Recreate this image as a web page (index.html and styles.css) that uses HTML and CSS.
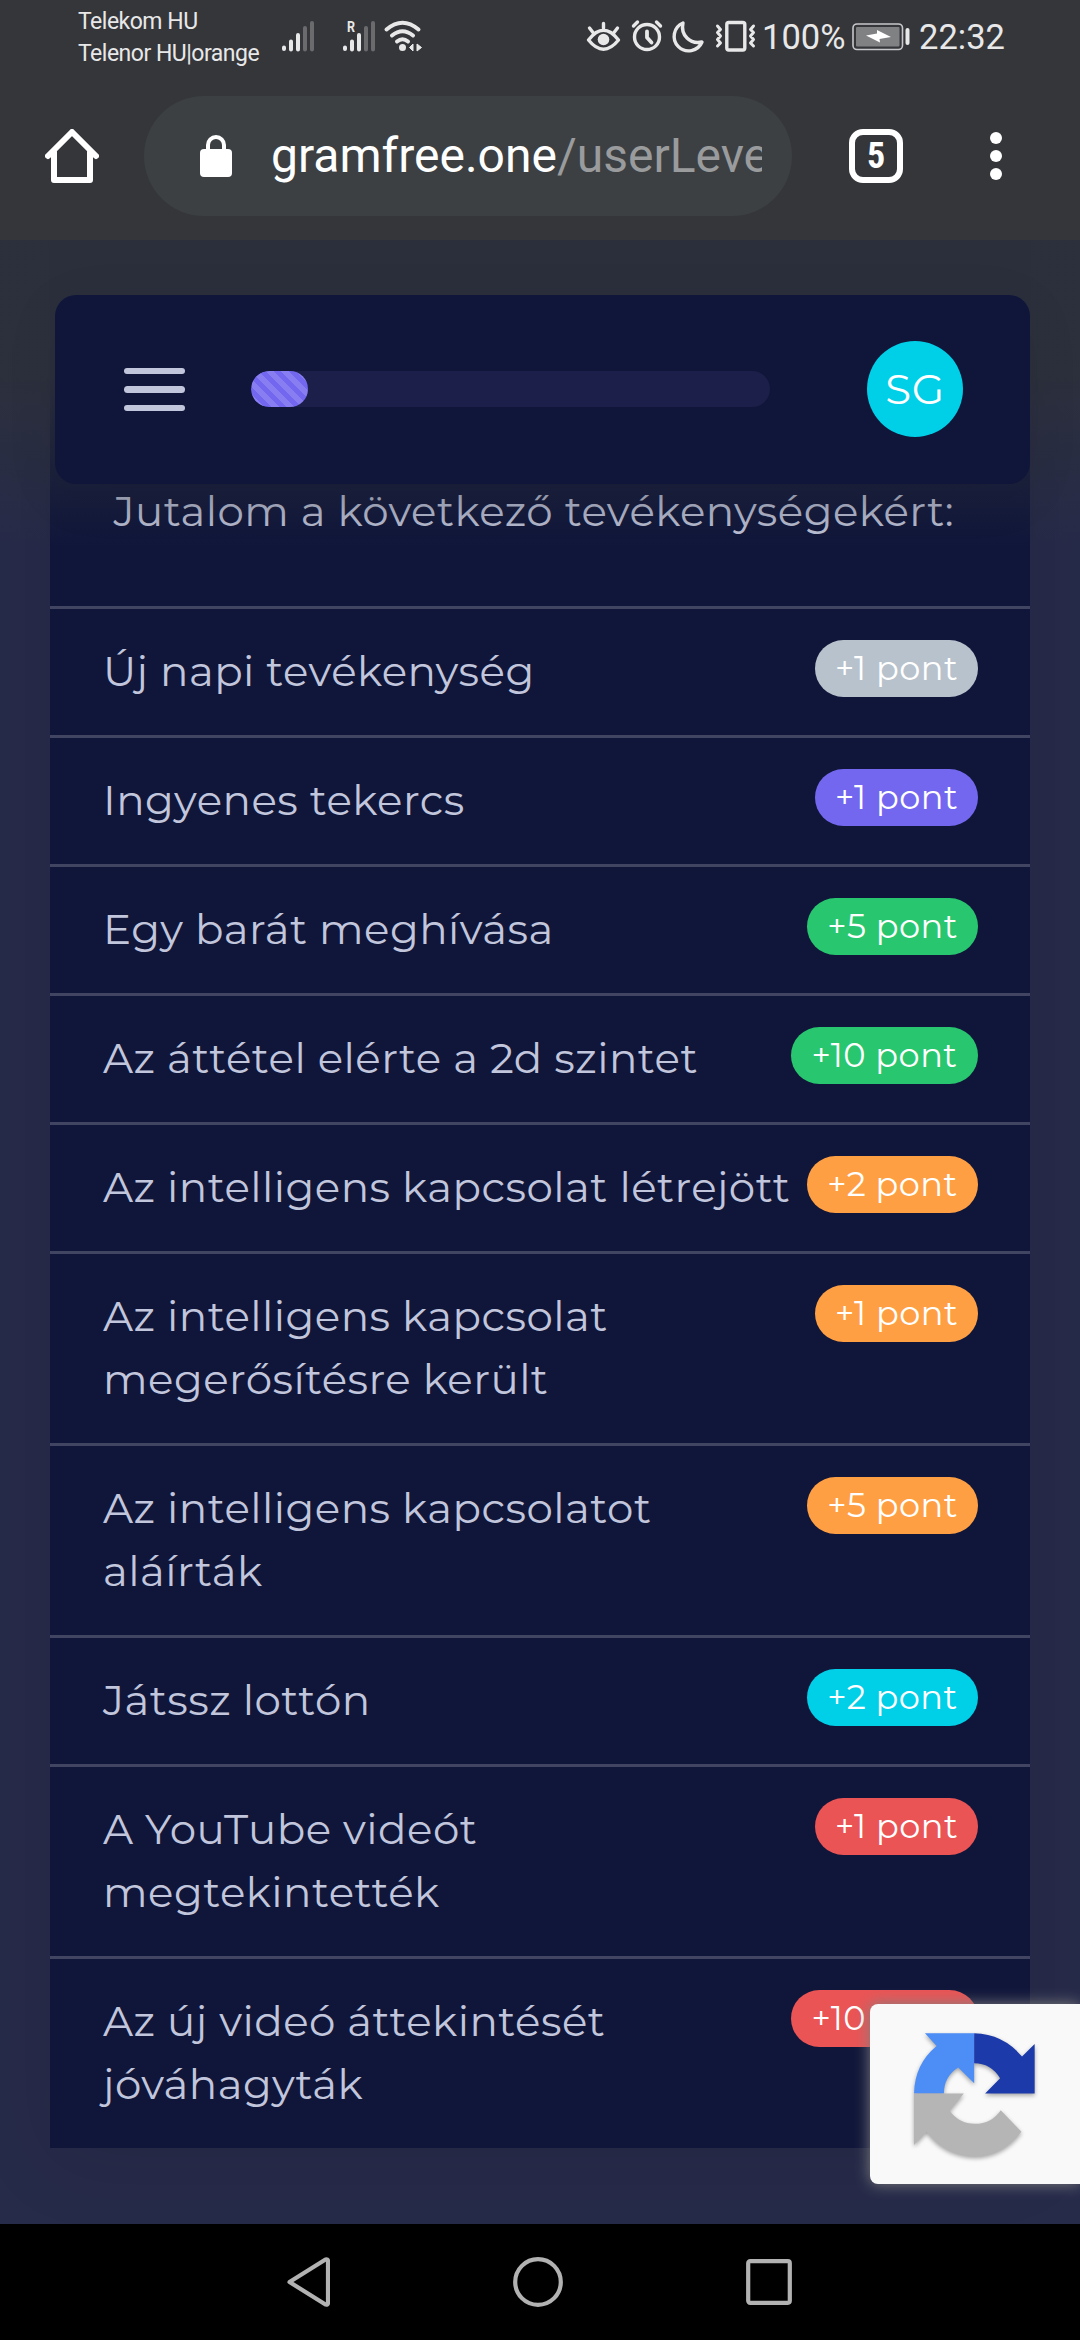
FILE: index.html
```html
<!DOCTYPE html>
<html lang="hu">
<head>
<meta charset="utf-8">
<title>gramfree.one</title>
<link rel="stylesheet" href="styles.css">
</head>
<body>
<div class="status">
  <div class="carriers"><span>Telekom HU</span><span>Telenor HU|orange</span></div>
  <svg class="sys-left" viewBox="280 0 145 72" width="145" height="72">
    <g stroke="#e8e8e9" stroke-width="4" stroke-linecap="round" fill="none">
      <path d="M284 47.500v1.500M291 41.500v8M298 35v14.500M345 47.500v1.500M352 41.500v8M359 35v14.500"/>
      <path stroke="#6b6b6e" d="M305 28v21.500M312 23v26.500M366 28v21.500M373 23v26.500"/>
      <path d="M386.500 29.500Q402.500 16 418.500 29.500M392 35.500Q402.500 27 413 35.500M397 41.500Q402.500 37 408 41.500" stroke-width="4"/>
    </g>
    <circle cx="402.500" cy="47.500" r="3.500" fill="#e8e8e9"/>
    <path d="M409.500 47.500L413 44V51ZM417 44L421.500 47.500L417 51Z" fill="#e8e8e9" stroke="#e8e8e9"/>
    <text x="347" y="32" class="roam" textLength="8" lengthAdjust="spacingAndGlyphs">R</text>
  </svg>
  <svg class="sys-right" viewBox="584 0 174 72" width="174" height="72">
    <g stroke="#e8e8e9" stroke-width="3.400" stroke-linecap="round" stroke-linejoin="round" fill="none">
      <path d="M588.500 40Q603.500 20.500 618.500 40Q603.500 58.500 588.500 40ZM603.500 23.500v5M589.500 28l3.500 4.500M617.500 28l-3.500 4.500"/>
      <circle cx="647" cy="37" r="12.500"/>
      <path d="M647 31.500v6l4.500 5" stroke-width="3.800"/>
      <path d="M633.500 26l4-4M660.500 26l-4-4"/>
      <path d="M683 23A14.500 14.500 0 1 0 702 42Q693 44 687 38Q681 32 683 23Z"/>
      <rect x="726.800" y="22.500" width="18" height="27.500" rx="2"/>
      <path stroke-width="3" d="M717.500 26l3 3.500-3 3 3 3.500-3 3.500 3 3.500-3 3M753.500 26l-3 3.500 3 3-3 3.500 3 3.500-3 3.500 3 3"/>
    </g>
    <circle cx="603.500" cy="39.500" r="5.800" fill="#e8e8e9"/>
  </svg>
  <span class="pct">100%</span>
  <svg class="battery" viewBox="852 0 58 72" width="58" height="72">
    <rect x="853" y="24" width="49.500" height="25.500" rx="4" fill="none" stroke="#c8c8ca" stroke-width="1.600"/>
    <rect x="856" y="27" width="43.500" height="19.500" rx="1" fill="#808183"/>
    <path d="M866 35.500L877 33.500L877 30L891 37L879.500 39L880 42.500Z" fill="#fff"/>
    <rect x="905.500" y="28" width="4" height="17" rx="2" fill="#e8e8e9"/>
  </svg>
  <span class="time">22:32</span>
</div>
<div class="toolbar">
  <svg class="home" viewBox="45 129 54 54" width="54" height="54"><path d="M48 156L72 132L96 156M54 152V180H90V152" fill="none" stroke="#fff" stroke-width="6" stroke-linecap="round" stroke-linejoin="round"/></svg>
  <div class="address">
    <svg viewBox="200 134 32 42" width="32" height="42"><rect x="200" y="148" width="32" height="28" rx="4" fill="#fff"/><path d="M208 150V144a8 8 0 0 1 16 0V150" fill="none" stroke="#fff" stroke-width="4"/></svg>
    <div class="url">gramfree.one<span class="path">/userLeve</span></div>
  </div>
  <div class="tabs">5</div>
  <div class="more"><i></i><i></i><i></i></div>
</div>
<main class="page">
  <section class="panel">
    <h1 class="title">Jutalom a következő tevékenységekért:</h1>
    <ul class="list">
      <li><span class="label">Új napi tevékenység</span><span class="badge gray one">+1 pont</span></li>
      <li><span class="label">Ingyenes tekercs</span><span class="badge purple one">+1 pont</span></li>
      <li><span class="label">Egy barát meghívása</span><span class="badge green">+5 pont</span></li>
      <li><span class="label">Az áttétel elérte a 2d szintet</span><span class="badge green ten">+10 pont</span></li>
      <li><span class="label">Az intelligens kapcsolat létrejött</span><span class="badge orange">+2 pont</span></li>
      <li><span class="label">Az intelligens kapcsolat<br>megerősítésre került</span><span class="badge orange one">+1 pont</span></li>
      <li><span class="label">Az intelligens kapcsolatot<br>aláírták</span><span class="badge orange">+5 pont</span></li>
      <li><span class="label">Játssz lottón</span><span class="badge cyan">+2 pont</span></li>
      <li><span class="label">A YouTube videót<br>megtekintették</span><span class="badge red one">+1 pont</span></li>
      <li><span class="label">Az új videó áttekintését<br>jóváhagyták</span><span class="badge red ten">+10 pont</span></li>
    </ul>
  </section>
  <div class="fade"></div>
  <header class="navbar">
    <div class="menu"><i></i><i></i><i></i></div>
    <div class="progress"><div class="bar"></div></div>
    <div class="avatar">SG</div>
  </header>
  <div class="captcha">
    <svg viewBox="524 340 364 371" width="121" height="124">
      <path fill="#4c8df6" d="M557 340H705V490L657 443Q614 470 614 521H524Q526 432 592 378Z"/>
      <path fill="#1c3aa9" d="M705 340Q792 342 849 410L887 372V521H738L783 475Q755 430 705 430Z"/>
      <path fill="#b5b5b5" d="M524 521H674L631 573Q660 612 707 612Q757 612 785 571L847 636Q790 710 705 710Q615 706 562 636L524 676Z"/>
    </svg>
  </div>
</main>
<nav class="sysnav">
  <svg viewBox="287 2257 43 50" width="43" height="50"><path d="M289.500 2282L325.500 2259.500Q328 2259 328 2261V2303Q328 2305 325.500 2304.500Z" fill="none" stroke="#b2b2b2" stroke-width="4.200" stroke-linejoin="round"/></svg>
  <svg viewBox="0 0 50 50" width="50" height="50"><circle cx="25" cy="25" r="22.800" fill="none" stroke="#b2b2b2" stroke-width="4.200"/></svg>
  <svg viewBox="0 0 46 46" width="46" height="46"><rect x="2.200" y="2.200" width="41.600" height="41.600" rx="2" fill="none" stroke="#b2b2b2" stroke-width="4.200"/></svg>
</nav>
</body>
</html>
```
FILE: styles.css
```css
* { box-sizing: border-box; }
body {
  margin: 0;
  width: 1080px;
  height: 2340px;
  overflow: hidden;
  display: flex;
  flex-direction: column;
  background: #35363a;
  font-family: Montserrat, Inter, sans-serif;
  letter-spacing: .48px;
  color: #c2c6dc;
}
svg { display: block; flex: none; }

.status {
  flex: none;
  height: 72px;
  display: flex;
  padding-left: 78px;
  font-family: Roboto, sans-serif;
  letter-spacing: 0;
  color: #e8e8e9;
  white-space: nowrap;
}
.carriers {
  width: 202px;
  display: flex;
  flex-direction: column;
  padding-top: 6px;
  font-size: 23px;
  line-height: 32px;
  letter-spacing: -.5px;
}
.roam { font: bold 15px Roboto, sans-serif; fill: #e8e8e9; }
.sys-right { margin-left: 159px; }
.pct { width: 90px; padding-left: 4px; font-size: 34.500px; line-height: 75px; }
.battery { margin-left: 4px; }
.time { margin-left: 9px; font-size: 34.500px; line-height: 75px; }

.toolbar {
  flex: none;
  height: 168px;
  padding: 0 78px 0 45px;
  display: flex;
  align-items: center;
  letter-spacing: 0;
}
.address {
  width: 648px;
  height: 120px;
  margin-left: 45px;
  padding: 0 30px 0 56px;
  border-radius: 60px;
  background: #3c4043;
  display: flex;
  align-items: center;
  gap: 39px;
}
.url {
  flex: 1;
  overflow: hidden;
  white-space: nowrap;
  font: 48px/72px Roboto, sans-serif;
  color: #fff;
}
.path { color: #9a9b9d; }
.tabs {
  width: 54px;
  height: 54px;
  margin-left: 57px;
  border: 6px solid #fff;
  border-radius: 14px;
  color: #fff;
  font: bold 36px/42px "Roboto Condensed", Roboto, sans-serif;
  text-align: center;
}
.more { margin-left: auto; display: flex; flex-direction: column; gap: 6px; }
.more i { width: 12px; height: 12px; border-radius: 50%; background: #fff; }

.page {
  position: relative;
  flex: none;
  height: 1984px;
  padding: 0 50px;
  overflow: hidden;
  background: #272b4a;
}
.panel {
  height: 1908px;
  background: #10163a;
  box-shadow: 0 12px 75px rgba(0, 0, 0, .1);
}
.title {
  height: 366px;
  margin: 0;
  padding: 240px 0 0 63.500px;
  font-size: 42px;
  font-weight: 400;
  line-height: 63px;
  white-space: nowrap;
}
.list { margin: 0; padding: 0; list-style: none; }
.list li {
  display: flex;
  justify-content: space-between;
  align-items: flex-start;
  padding: 31px 52px 32px 53px;
  border-top: 3px solid #414561;
}
.label { font-size: 42px; line-height: 63px; white-space: nowrap; }
.badge {
  width: 171px;
  height: 57px;
  border-radius: 29px;
  color: #fff;
  font-size: 33.600px;
  line-height: 56px;
  text-align: center;
  white-space: nowrap;
}
.badge.one { width: 163px; }
.badge.ten { width: 187px; }
.gray { background: #b8c2cc; }
.purple { background: #7367f0; }
.green { background: #28c76f; }
.orange { background: #ff9f43; }
.cyan { background: #00cfe8; }
.red { background: #ea5455; }

/* translucent veil under the floating navbar */
.fade {
  position: absolute;
  inset: 0 0 auto 0;
  height: 306px;
  background: linear-gradient(180deg, rgba(44, 48, 60, .96) 44%, rgba(44, 48, 60, .46) 73%, rgba(44, 48, 60, 0));
}
.navbar {
  position: absolute;
  top: 55px;
  left: 55px;
  width: 975px;
  height: 189px;
  padding: 0 67px 0 69px;
  display: flex;
  align-items: center;
  border-radius: 21px;
  background: #10163a;
  box-shadow: 0 12px 60px rgba(0, 0, 0, .06);
}
.menu { width: 61px; display: flex; flex-direction: column; gap: 12px; }
.menu i { height: 6.500px; border-radius: 4px; background: #c2c6dc; }
.progress { width: 519px; height: 36px; margin: -1px 0 0 66px; border-radius: 18px; background: #1b1f4a; overflow: hidden; }
.bar {
  width: 57px;
  height: 36px;
  border-radius: 18px;
  background: #7367f0 linear-gradient(45deg, rgba(255, 255, 255, .15) 25%, transparent 25%, transparent 50%, rgba(255, 255, 255, .15) 50%, rgba(255, 255, 255, .15) 75%, transparent 75%) 0 0 / 15px 15px;
}
.avatar {
  width: 96px;
  height: 96px;
  margin: -1px 0 0 auto;
  border-radius: 50%;
  background: #00cfe8;
  color: #fff;
  font-size: 42px;
  line-height: 97px;
  text-align: center;
}
.captcha {
  position: absolute;
  right: 0;
  top: 1764px;
  width: 210px;
  height: 180px;
  padding: 29px 0 0 44px;
  border-radius: 8px 0 0 8px;
  background: #f9f9f9;
  box-shadow: 0 0 15px gray;
}
.captcha svg { filter: drop-shadow(0 2px 2px rgba(0, 0, 0, .35)); }

.sysnav {
  flex: none;
  height: 116px;
  padding: 0 288px 0 287px;
  display: flex;
  align-items: center;
  justify-content: space-between;
  background: #000;
}
```
